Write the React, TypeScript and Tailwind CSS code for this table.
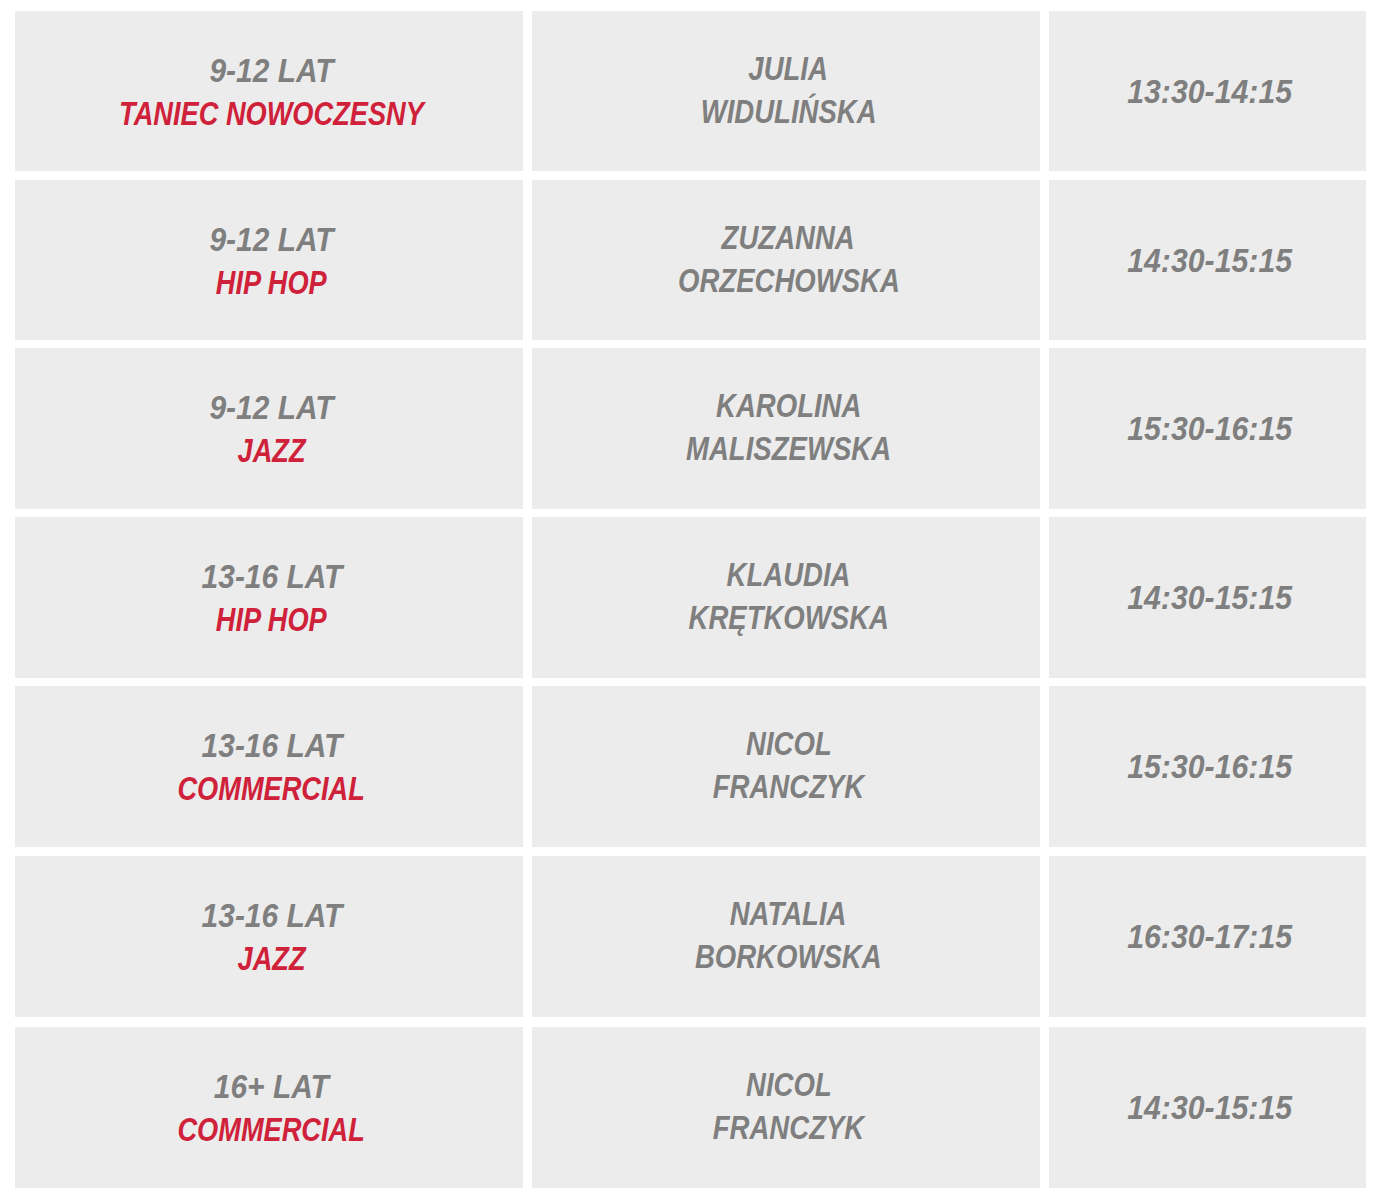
import React from "react";

const rows = [
  { age: "9-12 LAT", style: "TANIEC NOWOCZESNY", first: "JULIA", last: "WIDULIŃSKA", time: "13:30-14:15", cls: "h-[160px]" },
  { age: "9-12 LAT", style: "HIP HOP", first: "ZUZANNA", last: "ORZECHOWSKA", time: "14:30-15:15", cls: "h-[160px] mt-[9px]" },
  { age: "9-12 LAT", style: "JAZZ", first: "KAROLINA", last: "MALISZEWSKA", time: "15:30-16:15", cls: "h-[161px] mt-[8px]" },
  { age: "13-16 LAT", style: "HIP HOP", first: "KLAUDIA", last: "KRĘTKOWSKA", time: "14:30-15:15", cls: "h-[161px] mt-[8px]" },
  { age: "13-16 LAT", style: "COMMERCIAL", first: "NICOL", last: "FRANCZYK", time: "15:30-16:15", cls: "h-[161px] mt-[8px]" },
  { age: "13-16 LAT", style: "JAZZ", first: "NATALIA", last: "BORKOWSKA", time: "16:30-17:15", cls: "h-[161px] mt-[9px]" },
  { age: "16+ LAT", style: "COMMERCIAL", first: "NICOL", last: "FRANCZYK", time: "14:30-15:15", cls: "h-[161px] mt-[10px]" },
];

const font = "font-['Liberation_Sans_Narrow','Arial_Narrow','Liberation_Sans',sans-serif] italic font-bold text-[34px] leading-[43px]";

export default function App() {
  return (
    <div className="w-[1382px] h-[1204px] bg-white pt-[11px] pl-[15px]">
      <div className="flex flex-col">
        {rows.map((r, i) => (
          <div key={i} className={`flex gap-[9px] ${r.cls}`}>
            <div className={`w-[508px] bg-[#ececec] flex flex-col items-center justify-center text-center pt-[1px] pl-[5px] ${font}`}>
              <div className="text-[#7f7f7f] scale-x-[0.88]">{r.age}</div>
              <div className="text-[#d0213a] scale-x-[0.8]">{r.style}</div>
            </div>
            <div className={`w-[508px] bg-[#ececec] flex flex-col items-center justify-center text-center pb-[3px] pl-[5px] ${font}`}>
              <div className="text-[#7f7f7f] scale-x-[0.81]">{r.first}</div>
              <div className="text-[#7f7f7f] scale-x-[0.81]">{r.last}</div>
            </div>
            <div className={`w-[317px] bg-[#ececec] flex items-center justify-center text-center pl-[4px] ${font}`}>
              <div className="text-[#7f7f7f] scale-x-[0.89]">{r.time}</div>
            </div>
          </div>
        ))}
      </div>
    </div>
  );
}
